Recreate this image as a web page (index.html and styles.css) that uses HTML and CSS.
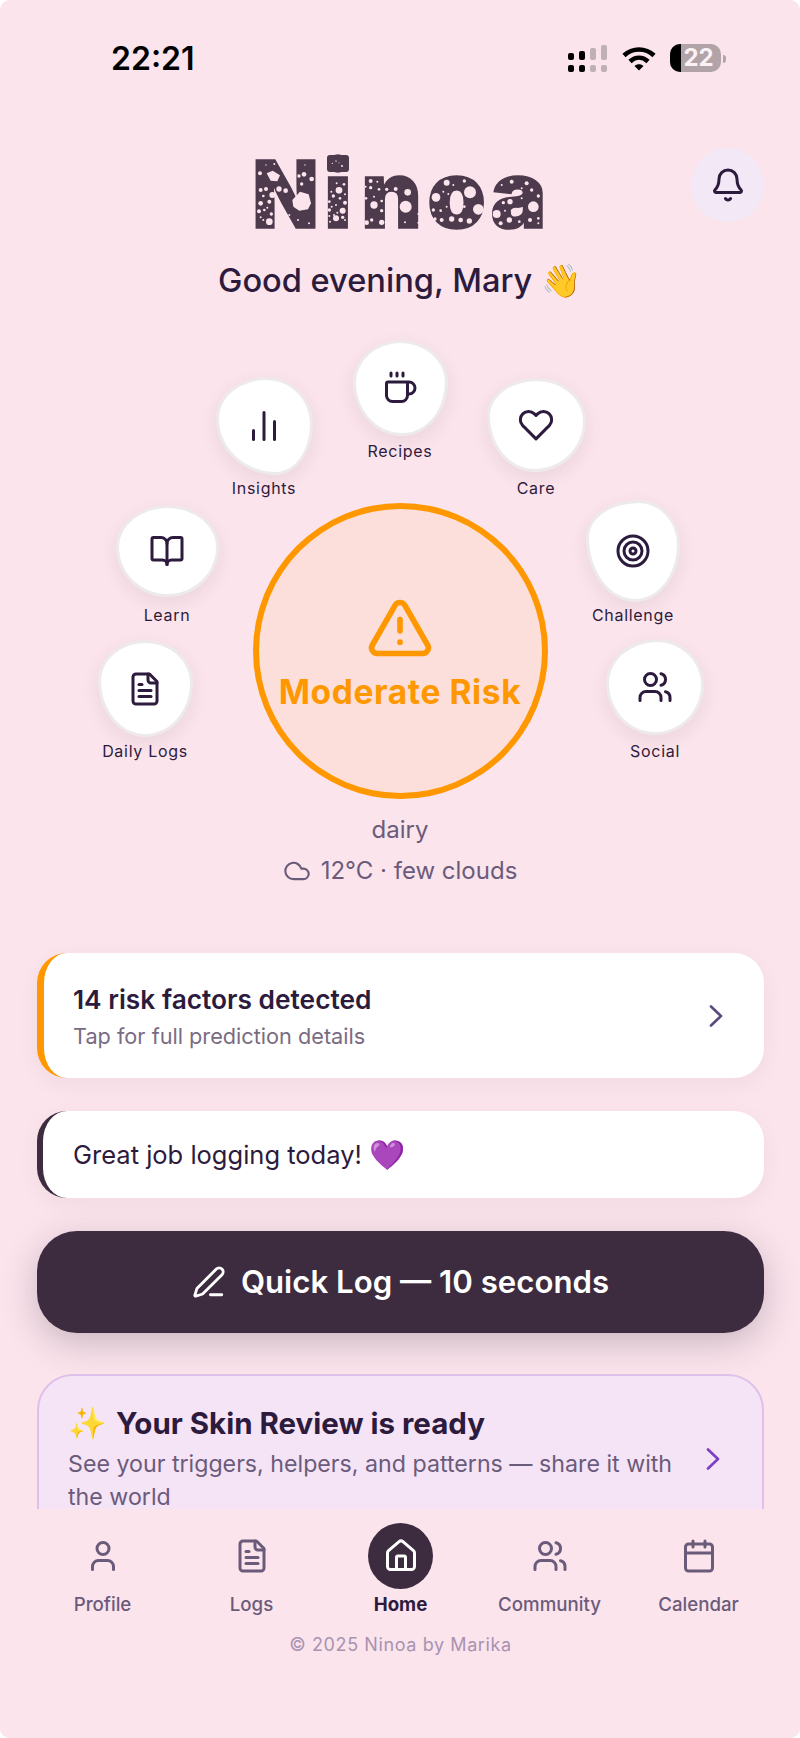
FILE: index.html
```html
<!DOCTYPE html>
<html lang="en">
<head>
<meta charset="utf-8">
<title>Ninoa</title>
<link rel="stylesheet" href="styles.css">
</head>
<body>
<div class="phone">
  <main class="main">
    <div class="status">
      <span class="time">22:21</span>
      <div class="status-icons">
        <svg class="signal" width="40" height="28" viewBox="0 0 40 28" fill="#000">
          <rect x="0" y="8" width="6" height="7" rx="2"/><rect x="0" y="20" width="6" height="7" rx="2"/>
          <rect x="11" y="6" width="6" height="9" rx="2"/><rect x="11" y="20" width="6" height="7" rx="2"/>
          <g fill="#bfb0b6"><rect x="22" y="3" width="6" height="12" rx="2"/><rect x="22" y="20" width="6" height="7" rx="2"/>
          <rect x="33" y="0" width="6" height="15" rx="2"/><rect x="33" y="20" width="6" height="7" rx="2"/></g>
        </svg>
        <svg class="wifi" width="34" height="25" viewBox="0 0 34 25" fill="none" stroke="#000" stroke-width="4.6">
          <path d="M2 9.5C10.500 1.500 23.500 1.500 32 9.500"/><path d="M8 15.500C13.500 10.500 20.500 10.500 26 15.500"/>
          <path d="M12.500 20 17 24.500 21.500 20C19 17.500 15 17.500 12.500 20Z" fill="#000" stroke="none"/>
        </svg>
        <div class="battery"><span class="battery-fill"></span><span class="battery-num">22</span></div>
        <span class="battery-nub"></span>
      </div>
    </div>

    <header class="header">
      <span></span>
      <div class="logo">
        <div class="logo-text"><span class="l-n">N</span><span class="l-i">i</span><span class="l-m">n</span><span class="l-o">o</span><span class="l-a">a</span></div>
        <svg class="logo-spots" viewBox="0 0 1020 300" fill="#fbe4ec">
          <path d="M187 180 210 155 236 163 243 190 234 208 208 212 190 200Z"/>
          <path d="M110 100 128 92 150 106 142 124 122 122Z"/>
          <circle cx="90" cy="100" r="6"/><circle cx="133" cy="72" r="3"/><circle cx="108" cy="75" r="2"/><circle cx="225" cy="75" r="2"/><circle cx="222" cy="103" r="7"/><circle cx="207" cy="108" r="5"/><circle cx="245" cy="117" r="7"/><circle cx="215" cy="132" r="5"/><circle cx="147" cy="147" r="8"/><circle cx="167" cy="152" r="7"/><circle cx="127" cy="165" r="9"/><circle cx="92" cy="150" r="6"/><circle cx="108" cy="147" r="6"/><circle cx="100" cy="168" r="4"/><circle cx="92" cy="190" r="7"/><circle cx="118" cy="185" r="6"/><circle cx="112" cy="203" r="3"/><circle cx="87" cy="214" r="6"/><circle cx="103" cy="210" r="4"/><circle cx="124" cy="222" r="5"/><circle cx="92" cy="232" r="3"/><circle cx="100" cy="240" r="3"/><circle cx="118" cy="245" r="10"/><circle cx="204" cy="240" r="3"/><circle cx="237" cy="250" r="3"/><circle cx="178" cy="225" r="3"/>
          <circle cx="307" cy="70" r="2"/><circle cx="318" cy="63" r="2"/><circle cx="336" cy="78" r="3"/><circle cx="327" cy="68" r="1.500"/>
          <circle cx="320" cy="130" r="3"/><circle cx="342" cy="133" r="4"/><circle cx="327" cy="151" r="10"/><circle cx="304" cy="155" r="3"/><circle cx="345" cy="163" r="3"/><circle cx="310" cy="168" r="5"/><circle cx="330" cy="175" r="4"/><circle cx="298" cy="185" r="4"/><circle cx="345" cy="188" r="6"/><circle cx="318" cy="195" r="3"/><circle cx="305" cy="200" r="3"/><circle cx="338" cy="212" r="9"/><circle cx="298" cy="210" r="5"/><circle cx="322" cy="218" r="3"/><circle cx="312" cy="225" r="3"/><circle cx="318" cy="235" r="9"/><circle cx="298" cy="228" r="3"/><circle cx="338" cy="232" r="5"/><circle cx="300" cy="245" r="3"/><circle cx="345" cy="240" r="3"/>
          <circle cx="422" cy="123" r="6"/><circle cx="442" cy="125" r="3"/><circle cx="407" cy="140" r="3"/><circle cx="422" cy="143" r="5"/><circle cx="447" cy="148" r="4"/><circle cx="470" cy="148" r="5"/><circle cx="497" cy="147" r="6"/><circle cx="533" cy="157" r="10"/><circle cx="408" cy="175" r="4"/><circle cx="432" cy="195" r="11"/><circle cx="455" cy="183" r="4"/><circle cx="527" cy="200" r="18"/><circle cx="455" cy="212" r="5"/><circle cx="565" cy="222" r="3"/><circle cx="410" cy="248" r="7"/><circle cx="425" cy="240" r="5"/><circle cx="455" cy="247" r="8"/><circle cx="525" cy="247" r="3"/><circle cx="565" cy="248" r="3"/><circle cx="432" cy="170" r="3"/><circle cx="478" cy="160" r="3"/>
          <circle cx="650" cy="128" r="9"/><circle cx="703" cy="123" r="5"/><circle cx="670" cy="135" r="3"/><circle cx="720" cy="157" r="18"/><circle cx="618" cy="172" r="13"/><circle cx="745" cy="208" r="16"/><circle cx="640" cy="155" r="3"/><circle cx="655" cy="162" r="3"/><circle cx="610" cy="210" r="5"/><circle cx="632" cy="212" r="4"/><circle cx="650" cy="200" r="3"/><circle cx="703" cy="200" r="4"/><circle cx="615" cy="237" r="5"/><circle cx="635" cy="240" r="6"/><circle cx="665" cy="237" r="8"/><circle cx="692" cy="240" r="7"/><circle cx="718" cy="243" r="8"/>
          <circle cx="845" cy="125" r="6"/><circle cx="815" cy="135" r="3"/><circle cx="890" cy="130" r="6"/><circle cx="905" cy="150" r="5"/><circle cx="875" cy="145" r="3"/><circle cx="925" cy="168" r="5"/><circle cx="840" cy="185" r="8"/><circle cx="820" cy="188" r="5"/><circle cx="875" cy="175" r="3"/><circle cx="910" cy="200" r="16"/><ellipse cx="858" cy="213" rx="16" ry="10"/><circle cx="800" cy="222" r="12"/><circle cx="825" cy="212" r="3"/><circle cx="812" cy="250" r="6"/><circle cx="838" cy="240" r="8"/><circle cx="868" cy="245" r="4"/><circle cx="900" cy="240" r="6"/><circle cx="925" cy="235" r="4"/><circle cx="925" cy="250" r="3"/>
        </svg>
      </div>
      <button class="bell" aria-label="Notifications">
        <svg class="ic ic-dark" viewBox="0 0 24 24"><path d="M10.268 21a2 2 0 0 0 3.464 0"/><path d="M3.262 15.326A1 1 0 0 0 4 17h16a1 1 0 0 0 .74-1.673C19.410 13.956 18 12.499 18 8A6 6 0 0 0 6 8c0 4.499-1.411 5.956-2.738 7.326"/></svg>
      </button>
    </header>

    <h1 class="greeting">Good evening, Mary <span class="wave">👋</span></h1>

    <section class="orbit">
      <div class="node node-insights"><div class="blob"><svg class="ic ic-dark" viewBox="0 0 24 24"><path d="M5 21v-6"/><path d="M12 21V3"/><path d="M19 21V9"/></svg></div><span class="node-label">Insights</span></div>
      <div class="node node-recipes"><div class="blob"><svg class="ic ic-dark" viewBox="0 0 24 24"><path d="M10 2v2"/><path d="M14 2v2"/><path d="M16 8a1 1 0 0 1 1 1v8a4 4 0 0 1-4 4H7a4 4 0 0 1-4-4V9a1 1 0 0 1 1-1h14a4 4 0 1 1 0 8h-1"/><path d="M6 2v2"/></svg></div><span class="node-label">Recipes</span></div>
      <div class="node node-care"><div class="blob"><svg class="ic ic-dark" viewBox="0 0 24 24"><path d="M20.840 4.610a5.500 5.500 0 0 0-7.780 0L12 5.670l-1.060-1.060a5.500 5.500 0 0 0-7.780 7.780l1.060 1.060L12 21.230l7.780-7.780 1.060-1.060a5.500 5.500 0 0 0 0-7.780z"/></svg></div><span class="node-label">Care</span></div>
      <div class="node node-learn"><div class="blob"><svg class="ic ic-dark" viewBox="0 0 24 24"><path d="M12 7v14"/><path d="M3 18a1 1 0 0 1-1-1V4a1 1 0 0 1 1-1h5a4 4 0 0 1 4 4 4 4 0 0 1 4-4h5a1 1 0 0 1 1 1v13a1 1 0 0 1-1 1h-6a3 3 0 0 0-3 3 3 3 0 0 0-3-3z"/></svg></div><span class="node-label">Learn</span></div>
      <div class="node node-challenge"><div class="blob"><svg class="ic ic-dark" viewBox="0 0 24 24"><circle cx="12" cy="12" r="10"/><circle cx="12" cy="12" r="6"/><circle cx="12" cy="12" r="2"/></svg></div><span class="node-label">Challenge</span></div>
      <div class="node node-logs"><div class="blob"><svg class="ic ic-dark" viewBox="0 0 24 24"><path d="M15 2H6a2 2 0 0 0-2 2v16a2 2 0 0 0 2 2h12a2 2 0 0 0 2-2V7Z"/><path d="M14 2v4a2 2 0 0 0 2 2h4"/><path d="M10 9H8"/><path d="M16 13H8"/><path d="M16 17H8"/></svg></div><span class="node-label">Daily Logs</span></div>
      <div class="node node-social"><div class="blob"><svg class="ic ic-dark" viewBox="0 0 24 24"><path d="M16 21v-2a4 4 0 0 0-4-4H6a4 4 0 0 0-4 4v2"/><circle cx="9" cy="7" r="4"/><path d="M22 21v-2a4 4 0 0 0-3-3.870"/><path d="M16 3.130a4 4 0 0 1 0 7.750"/></svg></div><span class="node-label">Social</span></div>

      <div class="risk">
        <svg class="risk-icon" viewBox="0 0 24 24"><path d="m21.730 18-8-14a2 2 0 0 0-3.480 0l-8 14A2 2 0 0 0 4 21h16a2 2 0 0 0 1.730-3"/><path d="M12 9v4"/><path d="M12 17h.010"/></svg>
        <span class="risk-text">Moderate Risk</span>
      </div>
    </section>

    <p class="trigger">dairy</p>
    <p class="weather">
      <svg class="cloud" viewBox="0 0 24 24"><path d="M17.500 19H9a7 7 0 1 1 6.710-9h1.790a4.500 4.500 0 1 1 0 9Z"/></svg>
      <span>12°C · few clouds</span>
    </p>

    <section class="cards">
      <div class="card card-risk">
        <div class="card-body">
          <div class="card-title">14 risk factors detected</div>
          <div class="card-sub">Tap for full prediction details</div>
        </div>
        <svg class="chev" viewBox="0 0 14 22"><path d="M2 1.500 12 11 2 20.500"/></svg>
      </div>
      <div class="card card-praise">Great job logging today! <span class="heart">💜</span></div>
      <button class="quick">
        <svg class="pen" viewBox="0 0 24 24"><path d="M13 21h8"/><path d="M21.174 6.812a1 1 0 0 0-3.986-3.987L3.842 16.174a2 2 0 0 0-.5.83l-1.321 4.352a.5.5 0 0 0 .623.622l4.353-1.320a2 2 0 0 0 .83-.497z"/></svg>
        <span>Quick Log — 10 seconds</span>
      </button>
      <div class="review">
        <div class="review-body">
          <div class="review-title"><span class="sparkle">✨</span>Your Skin Review is ready</div>
          <div class="review-sub">See your triggers, helpers, and patterns — share it with the world</div>
        </div>
        <svg class="chev chev-purple" viewBox="0 0 14 22"><path d="M2 1.500 12 11 2 20.500"/></svg>
      </div>
    </section>
  </main>

  <nav class="nav">
    <div class="tabs">
      <div class="tab"><span class="tab-icon"><svg class="ic" viewBox="0 0 24 24"><path d="M19 21v-2a4 4 0 0 0-4-4H9a4 4 0 0 0-4 4v2"/><circle cx="12" cy="7" r="4"/></svg></span><span>Profile</span></div>
      <div class="tab"><span class="tab-icon"><svg class="ic" viewBox="0 0 24 24"><path d="M15 2H6a2 2 0 0 0-2 2v16a2 2 0 0 0 2 2h12a2 2 0 0 0 2-2V7Z"/><path d="M14 2v4a2 2 0 0 0 2 2h4"/><path d="M10 9H8"/><path d="M16 13H8"/><path d="M16 17H8"/></svg></span><span>Logs</span></div>
      <div class="tab tab-active"><span class="tab-icon"><svg class="ic" viewBox="0 0 24 24"><path d="M15 21v-8a1 1 0 0 0-1-1h-4a1 1 0 0 0-1 1v8"/><path d="M3 10a2 2 0 0 1 .709-1.528l7-5.999a2 2 0 0 1 2.582 0l7 5.999A2 2 0 0 1 21 10v9a2 2 0 0 1-2 2H5a2 2 0 0 1-2-2z"/></svg></span><span>Home</span></div>
      <div class="tab"><span class="tab-icon"><svg class="ic" viewBox="0 0 24 24"><path d="M16 21v-2a4 4 0 0 0-4-4H6a4 4 0 0 0-4 4v2"/><circle cx="9" cy="7" r="4"/><path d="M22 21v-2a4 4 0 0 0-3-3.870"/><path d="M16 3.130a4 4 0 0 1 0 7.750"/></svg></span><span>Community</span></div>
      <div class="tab"><span class="tab-icon"><svg class="ic" viewBox="0 0 24 24"><path d="M8 2v4"/><path d="M16 2v4"/><rect x="3" y="4" width="18" height="18" rx="2"/><path d="M3 10h18"/></svg></span><span>Calendar</span></div>
    </div>
    <p class="copyright">© 2025 Ninoa by Marika</p>
  </nav>
</div>
</body>
</html>
```

FILE: styles.css
```css
* { box-sizing: border-box; }
html, body { margin: 0; padding: 0; background: #fff; }
body { font-family: Inter, "Noto Sans", sans-serif; color: #2d1b3d; }
p, h1 { margin: 0; }
button { font: inherit; border: 0; padding: 0; }

.phone {
  width: 800px; height: 1738px; overflow: hidden; border-radius: 10px;
  background: #fbe4ec; display: flex; flex-direction: column;
}
.main { height: 1509px; overflow: hidden; flex: none; }

.status { height: 100px; padding: 45px 74px 0 111px; display: flex; justify-content: space-between; align-items: flex-start; }
.time { font-size: 32px; font-weight: 600; line-height: 28px; color: #000; }
.status-icons { display: flex; align-items: flex-start; }
.signal { margin-right: 14px; }
.wifi { margin-right: 14px; margin-top: 1px; }
.battery { width: 51px; height: 28px; margin-top: -1px; border-radius: 10px; background: #b2a3a9; position: relative; overflow: hidden; display: flex; justify-content: center; align-items: center; }
.battery-fill { position: absolute; left: 0; top: 0; bottom: 0; width: 11px; background: #000; }
.battery-num { font-size: 24px; font-weight: 700; color: #fbf2f5; line-height: 28px; padding-left: 6px; position: relative; }
.battery-nub { width: 3px; height: 8px; margin: 10px 0 0 2px; border-radius: 0 3px 3px 0; background: #b2a3a9; }

.header { display: grid; grid-template-columns: 1fr auto 1fr; align-items: start; padding: 48px 36px 0 36px; }
.logo { position: relative; width: 340px; height: 100px; margin-top: -8px; }
.logo::after { content: ""; position: absolute; left: 97px; top: 15px; width: 22px; height: 17px; border-radius: 3px; background: #4d3a4c; }
.logo-text { display: flex; padding: 4.400px 0 0 20px; font-size: 94px; line-height: 100px; font-weight: 900; color: #4d3a4c; -webkit-text-stroke: 1.600px #4d3a4c; }
.logo-text span { display: flex; justify-content: center; flex: none; }
.l-n { width: 71px; transform: scaleX(.92); }
.l-i { width: 34px; }
.l-m { width: 67px; margin-left: 3px; }
.l-o { width: 63px; }
.l-a { width: 61px; }
.logo-spots { position: absolute; left: 0; top: 0; width: 340px; height: 100px; z-index: 1; }
.bell { justify-self: end; width: 73px; height: 74px; border-radius: 50%; background: #f3e8f5; display: flex; align-items: center; justify-content: center; }

.greeting { font-size: 32.600px; line-height: 40px; font-weight: 500; text-align: center; margin-top: 20px; color: #2d1b3d; }

.ic { width: 36px; height: 36px; fill: none; stroke: currentColor; stroke-width: 2; stroke-linecap: round; stroke-linejoin: round; display: block; }
.ic-dark { color: #2d1b3d; }

.orbit { position: relative; height: 506px; }
.node { position: absolute; width: 130px; display: flex; flex-direction: column; align-items: center; }
.blob { background: #fff; border: 3px solid #eeeaea; display: flex; align-items: center; justify-content: center; box-shadow: 0 6px 18px rgba(61, 43, 63, .08); }
.node-label { font-size: 16px; line-height: 20px; font-weight: 400; letter-spacing: .7px; color: #2d1b3d; }

.node-insights { left: 199px; top: 77px; gap: 3px; }
.node-insights .blob { width: 97px; height: 98px; border-radius: 52% 48% 38% 62% / 42% 48% 52% 58%; }
.node-recipes { left: 335px; top: 40px; gap: 5px; }
.node-recipes .blob { width: 95px; height: 96px; border-radius: 50% 50% 48% 52% / 44% 44% 56% 56%; }
.node-care { left: 471px; top: 78px; gap: 6px; }
.node-care .blob { width: 99px; height: 94px; border-radius: 50% 50% 52% 48% / 40% 46% 54% 60%; }
.node-learn { left: 102px; top: 205px; gap: 8px; }
.node-learn .blob { width: 103px; height: 92px; border-radius: 50% 50% 50% 50% / 46% 46% 54% 54%; }
.node-challenge { left: 568px; top: 200px; gap: 3px; }
.node-challenge .blob { width: 94px; height: 102px; border-radius: 56% 44% 48% 52% / 36% 44% 56% 64%; }
.node-logs { left: 80px; top: 340px; gap: 4px; }
.node-logs .blob { width: 95px; height: 97px; border-radius: 50% 50% 50% 50% / 42% 44% 56% 58%; }
.node-social { left: 590px; top: 339px; gap: 6px; }
.node-social .blob { width: 98px; height: 96px; border-radius: 52% 48% 50% 50% / 46% 48% 52% 54%; }

.risk { position: absolute; left: 252.500px; top: 203px; width: 295px; height: 296px; border-radius: 50%; border: 6px solid #ff9800; background: #fcdfda; display: flex; flex-direction: column; align-items: center; padding-top: 85px; }
.risk-icon { width: 68px; height: 68px; fill: none; stroke: #ff9800; stroke-width: 2; stroke-linecap: round; stroke-linejoin: round; }
.risk-text { font-size: 33.500px; letter-spacing: .6px; line-height: 40px; font-weight: 700; color: #ff9800; margin-top: 10px; }

.trigger { text-align: center; font-size: 24px; line-height: 30px; color: #6b5b7b; margin-top: 9px; }
.weather { display: flex; justify-content: center; align-items: center; gap: 10px; font-size: 24px; line-height: 30px; color: #6b5b7b; margin-top: 11px; }
.cloud { width: 28px; height: 28px; fill: none; stroke: currentColor; stroke-width: 1.800; stroke-linecap: round; stroke-linejoin: round; }

.cards { padding: 67px 36px 0 37px; display: flex; flex-direction: column; }
.card { background: #fff; border-radius: 30px; box-shadow: 0 6px 22px rgba(61, 43, 63, .05); display: flex; align-items: center; }
.card-risk { height: 125px; border-left: 7px solid #ff9800; padding: 0 41px 0 29px; justify-content: space-between; }
.card-body { padding-top: 3px; }
.card-title { font-size: 26.300px; line-height: 32px; font-weight: 600; color: #2d1b3d; }
.card-sub { font-size: 21.700px; line-height: 28px; color: #7a6b82; margin-top: 6px; }
.chev { width: 14px; height: 22px; fill: none; stroke: #5b4b7a; stroke-width: 2.600; stroke-linecap: round; stroke-linejoin: round; flex: none; }
.card-praise { height: 87px; margin-top: 33px; border-left: 6px solid #3d2b3f; padding-left: 30px; font-size: 25.500px; color: #2d1b3d; white-space: pre-wrap; }
.heart { font-size: 29px; }
.quick { height: 102px; margin-top: 33px; width: 100%; border-radius: 40px; background: #3d2b3f; color: #fff; display: flex; align-items: center; justify-content: center; gap: 15px; font-size: 31.200px; font-weight: 600; box-shadow: 0 10px 34px rgba(61, 43, 63, .25); }
.pen { width: 34px; height: 34px; fill: none; stroke: #fff; stroke-width: 2; stroke-linecap: round; stroke-linejoin: round; }
.review { margin-top: 41px; height: 180px; background: #f5e3f6; border: 2px solid #dfc0ea; border-radius: 36px; padding: 27px 42px 0 29px; display: flex; align-items: flex-start; gap: 20px; }
.review-body { flex: 1; }
.review-title { font-size: 29.500px; line-height: 40px; font-weight: 700; color: #2d1b3d; display: flex; align-items: center; gap: 9px; }
.sparkle { font-size: 31px; }
.review-sub { font-size: 23.200px; line-height: 33px; color: #6b5b7b; margin-top: 5px; }
.chev-purple { stroke: #7b3fc4; margin-top: 45px; }

.nav { flex: 1; background: #fbe4ec; padding: 14px 27px 0 28px; position: relative; }
.tabs { display: grid; grid-template-columns: repeat(5, 1fr); }
.tab { display: flex; flex-direction: column; align-items: center; gap: 4px; font-size: 18.700px; line-height: 24px; color: #6b5b7b; font-weight: 500; }
.tab-icon { width: 65px; height: 66px; border-radius: 50%; display: flex; align-items: center; justify-content: center; }
.tab-active { color: #2d1b3d; font-weight: 700; }
.tab-active .tab-icon { background: #3d2b3f; color: #fff; }
.copyright { text-align: center; font-size: 18px; line-height: 24px; letter-spacing: .6px; color: #a893b0; margin-top: 16px; }
```
